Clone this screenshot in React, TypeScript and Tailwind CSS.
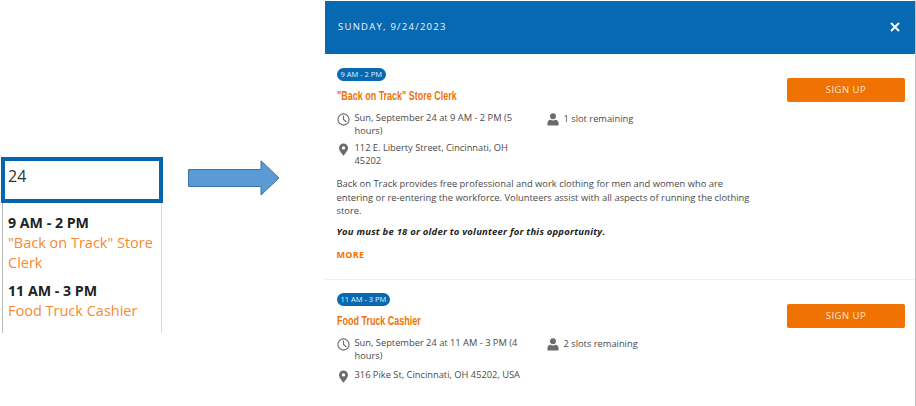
import React from 'react';

const sans = "font-['Open_Sans',sans-serif]";

function ClockIcon() {
  return (
    <svg viewBox="0 0 14 14" className="w-[13px] h-[13px] shrink-0 text-[#6b6b6b]" fill="none" stroke="currentColor">
      <circle cx="7" cy="7" r="6" strokeWidth="1.2" />
      <path d="M7 3.2V7l2.6 2.2" strokeWidth="1.2" strokeLinecap="round" />
    </svg>
  );
}

function PinIcon() {
  return (
    <svg viewBox="0 0 12 16" className="w-[11px] h-[13px] shrink-0 text-[#6b6b6b]" fill="currentColor">
      <path fillRule="evenodd" d="M6 0.5a5.5 5.5 0 0 0-5.5 5.5c0 3.4 4 7.4 5.5 9.8 1.5-2.4 5.5-6.4 5.5-9.8A5.5 5.5 0 0 0 6 0.5zm0 3.4a2.1 2.1 0 1 1 0 4.2 2.1 2.1 0 0 1 0-4.2z" />
    </svg>
  );
}

function PersonIcon() {
  return (
    <svg viewBox="0 0 13 14" className="w-[12px] h-[13px] shrink-0 text-[#6b6b6b]" fill="currentColor">
      <circle cx="6.5" cy="3.4" r="3.2" />
      <path d="M0.5 13.5v-2.6c0-2 1.6-3.3 3.2-3.5 1.7 0.8 3.9 0.8 5.6 0 1.6 0.2 3.2 1.5 3.2 3.5v2.6z" />
    </svg>
  );
}

interface ShiftProps {
  time: string;
  title: string;
  when: string;
  where: string;
  slots: string;
  buttonClass: string;
  whereClass: string;
  children?: React.ReactNode;
}

function Shift({ time, title, when, where, slots, buttonClass, whereClass, children }: ShiftProps) {
  return (
    <div className="flex justify-between pl-[11.5px] pr-[10px]">
      <div className="w-[416px]">
        <span className="block w-fit rounded-full bg-[#0769b2] px-[4px] h-[13px] leading-[13px] text-[7.5px] text-[#e6f0f8]">{time}</span>
        <h3 className="mt-[5px] h-[20px] w-fit origin-left scale-x-[0.69] whitespace-nowrap leading-[20px] text-[13px] text-[#ef7203] font-['Liberation_Sans',sans-serif] font-bold">
          {title}
        </h3>
        <div className="mt-[5px] flex">
          <div className="w-[210px]">
            <div className="flex gap-[5px]">
              <span className="mt-[2px]"><ClockIcon /></span>
              <p className="w-[170px] text-[9.3px] leading-[13px] text-[#4a4a4a]">{when}</p>
            </div>
            <div className={`flex gap-[6px] pl-px ${whereClass}`}>
              <span className="mt-[2px]"><PinIcon /></span>
              <p className="w-[170px] text-[9.3px] leading-[13px] text-[#4a4a4a]">{where}</p>
            </div>
          </div>
          <div className="flex items-center gap-[5px] h-[16px]">
            <PersonIcon />
            <span className="text-[9.3px] text-[#4a4a4a]">{slots}</span>
          </div>
        </div>
        {children}
      </div>
      <button className={`h-[24px] w-[118px] rounded-[2px] bg-[#ef7203] pt-px text-[9.5px] font-medium tracking-[0.5px] text-[#fde6cf] ${buttonClass}`}>
        SIGN UP
      </button>
    </div>
  );
}

export default function App() {
  return (
    <div className={`flex h-[406px] w-[916px] overflow-hidden bg-white ${sans}`}>
      <div className="ml-px w-[162px] shrink-0 pt-[157px]">
        <div className="h-[46px] border-[4px] border-[#0565ad] px-[3px] text-[16px] leading-[30px] text-[#333]">24</div>
        <div className="mx-px h-[130px] border-x border-r-[#d8d8d8] border-l-[#b8b8b8] px-[5px] pt-[10px]">
          <div className="text-[14.2px] leading-[20px] font-bold text-[#222]">9 AM - 2 PM</div>
          <div className="text-[14.5px] leading-[20px] text-[#f58a32]">"Back on Track" Store Clerk</div>
          <div className="mt-[8px] text-[14.2px] leading-[20px] font-bold text-[#222]">11 AM - 3 PM</div>
          <div className="text-[14.5px] leading-[20px] text-[#f58a32]">Food Truck Cashier</div>
        </div>
      </div>

      <svg viewBox="0 0 92 36" className="ml-[25px] mt-[160px] h-[36px] w-[92px] shrink-0">
        <path d="M0.5 9.5H73V0.8L91 18 73 35V26.5H0.5z" fill="#5b9bd5" stroke="#41719c" />
      </svg>

      <div className="ml-[45px] w-[591px] shrink-0 border-r border-[#c4c4c4]">
        <div className="mt-px flex h-[53px] items-center justify-between bg-[#0769b2] pl-[13px] pr-[15px]">
          <span className="text-[9.5px] tracking-[1.25px] text-[#eef5fa]">SUNDAY, 9/24/2023</span>
          <svg viewBox="0 0 10 10" className="mb-[2px] h-[10px] w-[10px]" stroke="white" strokeWidth="2">
            <path d="M1 1l8 8M9 1l-8 8" />
          </svg>
        </div>

        <div className="h-[226px] border-b border-[#f0f0f0] pt-[14px]">
          <Shift
            time="9 AM - 2 PM"
            title={'"Back on Track" Store Clerk'}
            when="Sun, September 24 at 9 AM - 2 PM (5 hours)"
            where="112 E. Liberty Street, Cincinnati, OH 45202"
            slots="1 slot remaining"
            buttonClass="mt-[10px]"
            whereClass="mt-[4px]"
          >
            <p className="mt-[10px] text-[9.4px] leading-[13.5px] text-[#4a4a4a]">
              Back on Track provides free professional and work clothing for men and women who are entering or re-entering the workforce. Volunteers assist with all aspects of running the clothing store.
            </p>
            <p className="mt-[7px] text-[9.5px] leading-[14px] font-bold italic tracking-[0.2px] text-[#222]">
              You must be 18 or older to volunteer for this opportunity.
            </p>
            <a className="mt-[9px] block text-[9px] leading-[13px] font-bold tracking-[0.3px] text-[#ef7203]">MORE</a>
          </Shift>
        </div>

        <div className="pt-[13px]">
          <Shift
            time="11 AM - 3 PM"
            title="Food Truck Cashier"
            when="Sun, September 24 at 11 AM - 3 PM (4 hours)"
            where="316 Pike St, Cincinnati, OH 45202, USA"
            slots="2 slots remaining"
            buttonClass="mt-[11px]"
            whereClass="mt-[6px]"
          />
        </div>
      </div>
    </div>
  );
}
